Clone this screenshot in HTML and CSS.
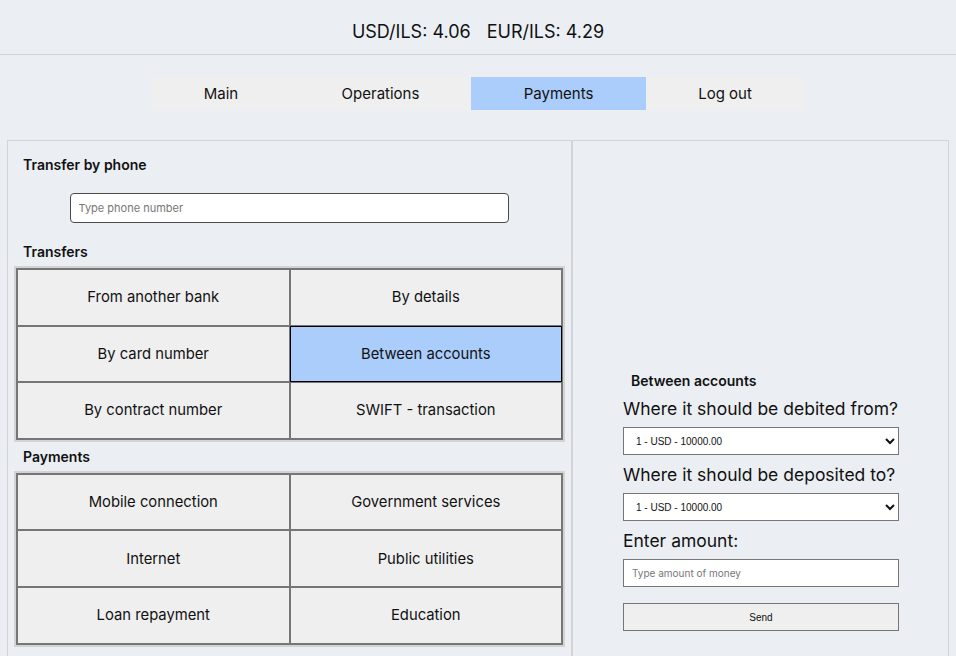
FILE: index.html
```html
<!DOCTYPE html>
<html lang="en">
<head>
<meta charset="utf-8">
<title>Payments</title>
<link rel="stylesheet" href="styles.css">
</head>
<body>
<header class="rates">
  <span>USD/ILS: 4.06</span>
  <span>EUR/ILS: 4.29</span>
</header>
<nav class="nav">
  <a class="nav-item nav-main">Main</a>
  <a class="nav-item nav-ops">Operations</a>
  <a class="nav-item nav-pay active">Payments</a>
  <a class="nav-item nav-out">Log out</a>
</nav>
<main class="content">
  <section class="panel left">
    <h3 class="title">Transfer by phone</h3>
    <div class="phone-row">
      <input class="phone" type="text" placeholder="Type phone number">
    </div>
    <h3 class="title title-gap">Transfers</h3>
    <div class="grid">
      <button class="cell">From another bank</button>
      <button class="cell">By details</button>
      <button class="cell">By card number</button>
      <button class="cell selected">Between accounts</button>
      <button class="cell">By contract number</button>
      <button class="cell">SWIFT - transaction</button>
    </div>
    <h3 class="title title-small">Payments</h3>
    <div class="grid">
      <button class="cell">Mobile connection</button>
      <button class="cell">Government services</button>
      <button class="cell">Internet</button>
      <button class="cell">Public utilities</button>
      <button class="cell">Loan repayment</button>
      <button class="cell">Education</button>
    </div>
  </section>
  <section class="panel right">
    <form class="form">
      <h3 class="form-title">Between accounts</h3>
      <label class="label">Where it should be debited from?</label>
      <select class="select"><option>1 - USD - 10000.00</option></select>
      <label class="label">Where it should be deposited to?</label>
      <select class="select"><option>1 - USD - 10000.00</option></select>
      <label class="label">Enter amount:</label>
      <input class="amount" type="text" placeholder="Type amount of money">
      <button class="send" type="button">Send</button>
    </form>
  </section>
</main>
</body>
</html>
```

FILE: styles.css
```css
html, body {
  margin: 0;
  padding: 0;
  height: 100%;
  overflow: hidden;
}
body {
  background: #ebeff4;
  font-family: Inter, "Noto Sans", Arial, sans-serif;
  color: #111;
}
.rates {
  display: flex;
  justify-content: center;
  align-items: center;
  gap: 16px;
  font-size: 18px;
  padding-top: 8px;
  box-sizing: border-box;
  height: 55px;
  border-bottom: 1px solid #d2d4d7;
}
.nav {
  margin: 22px auto 0;
  display: flex;
  width: 652px;
  height: 33px;
  background: #efefef;
}
.nav-item {
  display: flex;
  align-items: center;
  justify-content: center;
  font-size: 15px;
  color: #111;
}
.nav-main { width: 138px; }
.nav-ops { width: 181px; }
.nav-pay { width: 175px; }
.nav-out { width: 158px; }
.nav-item.active { background: #abcdfb; }

.content {
  display: flex;
  margin: 30px 7px 0;
  height: 540px;
}
.panel {
  border: 1px solid #d2d4d7;
  box-sizing: border-box;
}
.left {
  width: 565px;
  padding: 14px 6px 0;
}
.right {
  flex: 1;
  border-left: none;
  box-shadow: inset 1px 0 0 #d2d4d7;
  padding: 230px 0 0 51px;
}
.title {
  margin: 0;
  font-size: 14px;
  font-weight: 600;
  line-height: 20px;
  padding-left: 9px;
}
.title-gap { margin-top: 19px; }
.title-small { margin-top: 5px; }
.phone-row {
  display: flex;
  justify-content: center;
  margin-top: 18px;
}
.phone {
  width: 439px;
  height: 30px;
  box-sizing: border-box;
  border: 1px solid #4a4a4a;
  border-radius: 4px;
  padding: 0 8px;
  font-family: Inter, Arial, sans-serif;
  font-size: 11px;
  background: #fff;
  margin-right: 1px;
}
.phone::placeholder, .amount::placeholder { color: #777; }
.grid {
  margin-top: 4px;
  display: grid;
  grid-template-columns: 1fr 1fr;
  grid-auto-rows: 54.6px;
  gap: 2px;
  padding: 2px;
  background: #767676;
  border: 2px solid #d3d3d3;
}
.cell {
  border: none;
  margin: 0;
  background: #efefef;
  font-family: Inter, Arial, sans-serif;
  font-size: 14.8px;
  color: #111;
  padding: 0;
}
.cell.selected {
  background: #abcdfb;
  box-shadow: 0 0 0 1px #000;
  position: relative;
}
.form {
  width: 276px;
  display: flex;
  flex-direction: column;
}
.form-title {
  margin: 0 0 7px 8px;
  font-size: 14px;
  font-weight: 600;
  line-height: 20px;
}
.label {
  font-size: 17.5px;
  line-height: 22px;
  margin-bottom: 7px;
}
.select {
  height: 28px;
  border: 1px solid #767676;
  border-radius: 0;
  background: #fff;
  font-family: Arial, "Liberation Sans", sans-serif;
  font-size: 10px;
  color: #111;
  padding-left: 8px;
  margin-bottom: 9px;
}
.amount {
  height: 28px;
  box-sizing: border-box;
  border: 1px solid #767676;
  background: #fff;
  padding: 0 8px;
  font-family: Inter, Arial, sans-serif;
  font-size: 10px;
}
.send {
  margin-top: 16px;
  height: 28px;
  border: 1px solid #767676;
  background: #efefef;
  font-family: Arial, "Liberation Sans", sans-serif;
  font-size: 10px;
  color: #111;
}
```
